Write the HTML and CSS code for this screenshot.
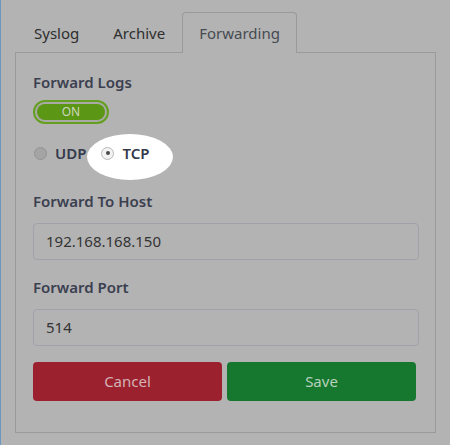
FILE: index.html
```html
<!DOCTYPE html>
<html>
<head>
<meta charset="utf-8">
<link rel="stylesheet" href="styles.css">
</head>
<body>
<div class="frame">
  <ul class="tabs">
    <li class="tab">Syslog</li>
    <li class="tab">Archive</li>
    <li class="tab active">Forwarding</li>
  </ul>
  <div class="panel">
    <div class="label">Forward Logs</div>
    <div class="toggle"><div class="toggle-inner">ON</div></div>
    <div class="radios">
      <span class="spot"></span>
      <label class="radio"><span class="dot"></span><span class="rtext">UDP</span></label>
      <label class="radio checked"><span class="dot"></span><span class="rtext">TCP</span></label>
    </div>
    <div class="label host">Forward To Host</div>
    <div class="input">192.168.168.150</div>
    <div class="label port">Forward Port</div>
    <div class="input">514</div>
    <div class="buttons">
      <div class="btn cancel">Cancel</div>
      <div class="btn save">Save</div>
    </div>
  </div>
</div>
</body>
</html>
```
FILE: styles.css
```css
html, body {
  margin: 0;
  padding: 0;
  background: #b3b3b3;
}
.frame {
  width: 450px;
  height: 445px;
  box-sizing: border-box;
  border-left: 1px solid #6b97c0;
  font-family: "Noto Sans", "Open Sans", sans-serif;
  padding: 12px 14px 0 14px;
  color: #3b4050;
}
.tabs {
  list-style: none;
  margin: 0;
  padding: 0 0 0 2px;
  display: flex;
  border-bottom: 1px solid #9a9a9a;
  height: 41px;
  box-sizing: border-box;
}
.tab {
  font-size: 15px;
  color: #2e2e2e;
  padding: 0 16px;
  line-height: 40px;
  border: 1px solid transparent;
  border-bottom: none;
  border-radius: 4px 4px 0 0;
}
.tab.active {
  color: #474b52;
  border-color: #9a9a9a;
  background: #b3b3b3;
  margin-bottom: -1px;
  height: 41px;
  box-sizing: border-box;
}
.panel {
  border: 1px solid #9a9a9a;
  border-top: none;
  height: 380px;
  box-sizing: border-box;
  padding: 18px 16px 0 17px;
}
.label {
  font-size: 15px;
  font-weight: 600;
  line-height: 22px;
  color: #3b4050;
}
.toggle {
  margin-top: 7px;
  width: 76px;
  height: 24px;
  box-sizing: border-box;
  border: 2px solid #64a01e;
  border-radius: 12px;
  padding: 2px;
  background: #a9aaa8;
}
.toggle-inner {
  height: 16px;
  border-radius: 8px;
  background: #5b9614;
  color: #cdd6be;
  font-size: 12px;
  line-height: 16px;
  text-align: center;
}
.radios {
  position: relative;
  display: flex;
  align-items: center;
  height: 30px;
  margin-top: 14px;
  gap: 15px;
  padding-left: 1px;
}
.spot {
  position: absolute;
  left: 54px;
  top: -4px;
  width: 86px;
  height: 46px;
  border-radius: 50%;
  background: #ffffff;
}
.radio {
  position: relative;
  display: flex;
  align-items: center;
  gap: 8px;
  font-size: 15px;
  font-weight: 600;
  color: #343a4c;
}
.dot {
  width: 13px;
  height: 13px;
  box-sizing: border-box;
  border-radius: 50%;
  border: 1px solid #939393;
  background: #a4a4a4;
  position: relative;
}
.radio.checked .dot {
  border-color: #b9b9b9;
  background: #f2f2f2;
}
.radio.checked .dot::after {
  content: "";
  position: absolute;
  left: 3.5px;
  top: 3.5px;
  width: 4px;
  height: 4px;
  border-radius: 50%;
  background: #4a4a4a;
}
.host {
  margin-top: 22px;
}
.input {
  margin-top: 11px;
  height: 37px;
  box-sizing: border-box;
  border: 1px solid #9fa2a8;
  border-radius: 4px;
  padding: 0 12px;
  font-size: 15px;
  line-height: 35px;
  color: #343434;
}
.port {
  margin-top: 16px;
}
.buttons {
  margin-top: 16px;
  display: grid;
  grid-template-columns: 189px 189px;
  gap: 5px;
}
.btn {
  height: 39px;
  border-radius: 4px;
  font-size: 15px;
  line-height: 39px;
  text-align: center;
}
.cancel {
  background: #9c212e;
  color: #d4b3b6;
}
.save {
  background: #16782f;
  color: #b6d1bc;
}
```
